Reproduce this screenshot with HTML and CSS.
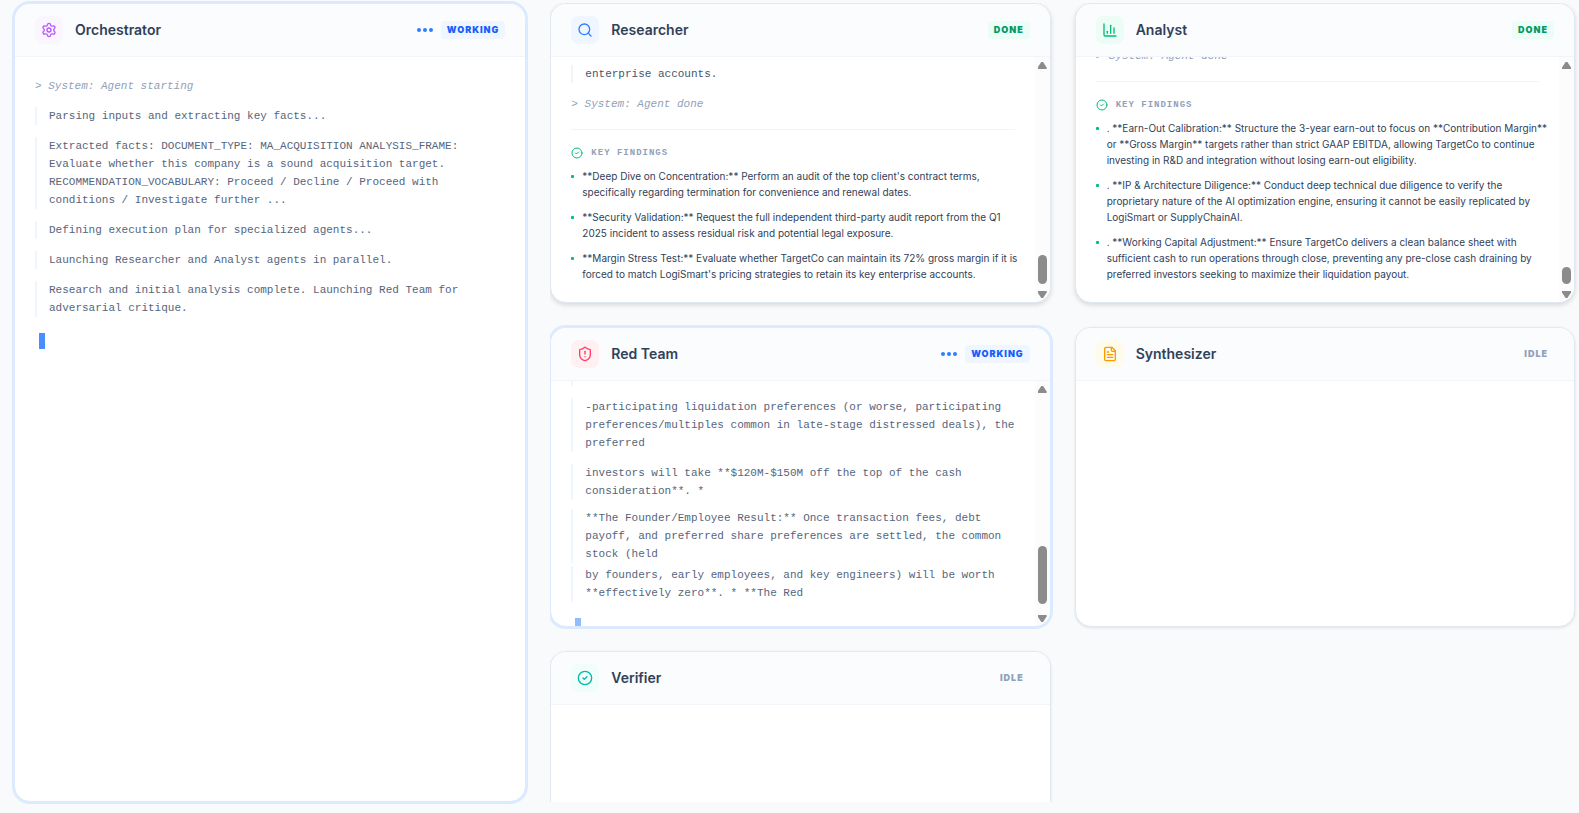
FILE: index.html
```
<!DOCTYPE html>
<html lang="en">

<head>
    <meta charset="UTF-8">
    <meta name="viewport" content="width=device-width, initial-scale=1.0">
    <title>Agent Board</title>
    <link rel="stylesheet" href="styles.css">
</head>

<body>
    <main class="board">
        <section class="card working">
            <header class="card-header">
                <span class="icon purple">
                    <svg viewBox="0 0 24 24"><path d="M9.671 4.136a2.34 2.34 0 0 1 4.659 0 2.34 2.34 0 0 0 3.319 1.915 2.34 2.34 0 0 1 2.33 4.033 2.34 2.34 0 0 0 0 3.831 2.34 2.34 0 0 1-2.33 4.033 2.34 2.34 0 0 0-3.319 1.915 2.34 2.34 0 0 1-4.659 0 2.34 2.34 0 0 0-3.32-1.915 2.34 2.34 0 0 1-2.33-4.033 2.34 2.34 0 0 0 0-3.831A2.34 2.34 0 0 1 6.35 6.051a2.34 2.34 0 0 0 3.319-1.915"/><circle cx="12" cy="12" r="3"/></svg>
                </span>
                <h2>Orchestrator</h2>
                <span class="dots"><i></i><i></i><i></i></span>
                <span class="badge">Working</span>
            </header>
            <div class="card-body">
                <div class="log">
                    <p class="system">&gt; System: Agent starting</p>
                    <p class="line">Parsing inputs and extracting key facts...</p>
                    <p class="line">Extracted facts: DOCUMENT_TYPE: MA_ACQUISITION ANALYSIS_FRAME: Evaluate whether this company is a sound acquisition target. RECOMMENDATION_VOCABULARY: Proceed / Decline / Proceed with conditions / Investigate further ...</p>
                    <p class="line">Defining execution plan for specialized agents...</p>
                    <p class="line">Launching Researcher and Analyst agents in parallel.</p>
                    <p class="line">Research and initial analysis complete. Launching Red Team for adversarial critique.</p>
                    <div class="cursor"></div>
                </div>
            </div>
        </section>

        <div class="agents">
            <section class="card done">
                <header class="card-header">
                    <span class="icon blue">
                        <svg viewBox="0 0 24 24"><circle cx="11" cy="11" r="8"/><path d="m21 21-4.3-4.3"/></svg>
                    </span>
                    <h2>Researcher</h2>
                    <span class="badge">Done</span>
                </header>
                <div class="card-body">
                    <div class="log at-end">
                        <p class="line">enterprise accounts.</p>
                        <p class="system">&gt; System: Agent done</p>
                        <div class="findings">
                            <h3>
                                <svg viewBox="0 0 24 24"><circle cx="12" cy="12" r="10"/><path d="m9 12 2 2 4-4"/></svg>
                                Key Findings
                            </h3>
                            <ul>
                                <li>**Deep Dive on Concentration:** Perform an audit of the top client's contract terms, specifically regarding termination for convenience and renewal dates.</li>
                                <li>**Security Validation:** Request the full independent third-party audit report from the Q1 2025 incident to assess residual risk and potential legal exposure.</li>
                                <li>**Margin Stress Test:** Evaluate whether TargetCo can maintain its 72% gross margin if it is forced to match LogiSmart's pricing strategies to retain its key enterprise accounts.</li>
                            </ul>
                        </div>
                    </div>
                    <div class="scrollbar">
                        <span class="arrow up"></span>
                        <span class="thumb" style="height: 29px"></span>
                        <span class="arrow down"></span>
                    </div>
                </div>
            </section>

            <section class="card done">
                <header class="card-header">
                    <span class="icon green">
                        <svg viewBox="0 0 24 24"><path d="M3 3v16a2 2 0 0 0 2 2h16"/><path d="M18 17V9"/><path d="M13 17V5"/><path d="M8 17v-3"/></svg>
                    </span>
                    <h2>Analyst</h2>
                    <span class="badge">Done</span>
                </header>
                <div class="card-body">
                    <div class="log at-end">
                        <p class="system">&gt; System: Agent done</p>
                        <div class="findings">
                            <h3>
                                <svg viewBox="0 0 24 24"><circle cx="12" cy="12" r="10"/><path d="m9 12 2 2 4-4"/></svg>
                                Key Findings
                            </h3>
                            <ul>
                                <li>. **Earn-Out Calibration:** Structure the 3-year earn-out to focus on **Contribution Margin** or **Gross Margin** targets rather than strict GAAP EBITDA, allowing TargetCo to continue investing in R&amp;D and integration without losing earn-out eligibility.</li>
                                <li>. **IP &amp; Architecture Diligence:** Conduct deep technical due diligence to verify the proprietary nature of the AI optimization engine, ensuring it cannot be easily replicated by LogiSmart or SupplyChainAI.</li>
                                <li>. **Working Capital Adjustment:** Ensure TargetCo delivers a clean balance sheet with sufficient cash to run operations through close, preventing any pre-close cash draining by preferred investors seeking to maximize their liquidation payout.</li>
                            </ul>
                        </div>
                    </div>
                    <div class="scrollbar">
                        <span class="arrow up"></span>
                        <span class="thumb" style="height: 17px"></span>
                        <span class="arrow down"></span>
                    </div>
                </div>
            </section>

            <section class="card working">
                <header class="card-header">
                    <span class="icon red">
                        <svg viewBox="0 0 24 24"><path d="M20 13c0 5-3.5 7.5-7.66 8.95a1 1 0 0 1-.67-.01C7.5 20.5 4 18 4 13V6a1 1 0 0 1 1-1c2 0 4.5-1.2 6.24-2.72a1.17 1.17 0 0 1 1.52 0C14.51 3.81 17 5 19 5a1 1 0 0 1 1 1z"/><path d="M12 8v4"/><path d="M12 16h.01"/></svg>
                    </span>
                    <h2>Red Team</h2>
                    <span class="dots"><i></i><i></i><i></i></span>
                    <span class="badge">Working</span>
                </header>
                <div class="card-body">
                    <div class="log streaming">
                        <p class="line">&nbsp;</p>
                        <p class="line">-participating liquidation preferences (or worse, participating preferences/multiples common in late-stage distressed deals), the preferred</p>
                        <p class="line">investors will take **$120M-$150M off the top of the cash consideration**. *</p>
                        <p class="line settling">**The Founder/Employee Result:** Once transaction fees, debt payoff, and preferred share preferences are settled, the common stock (held</p>
                        <p class="line entering">by founders, early employees, and key engineers) will be worth **effectively zero**. * **The Red</p>
                        <div class="cursor faded"></div>
                    </div>
                    <div class="scrollbar">
                        <span class="arrow up"></span>
                        <span class="thumb" style="height: 58px; margin-bottom: 11px"></span>
                        <span class="arrow down"></span>
                    </div>
                </div>
            </section>

            <section class="card">
                <header class="card-header">
                    <span class="icon amber">
                        <svg viewBox="0 0 24 24"><path d="M15 2H6a2 2 0 0 0-2 2v16a2 2 0 0 0 2 2h12a2 2 0 0 0 2-2V7z"/><path d="M14 2v4a2 2 0 0 0 2 2h4"/><path d="M10 9H8"/><path d="M16 13H8"/><path d="M16 17H8"/></svg>
                    </span>
                    <h2>Synthesizer</h2>
                    <span class="badge">Idle</span>
                </header>
                <div class="card-body"></div>
            </section>

            <section class="card">
                <header class="card-header">
                    <span class="icon teal">
                        <svg viewBox="0 0 24 24"><circle cx="12" cy="12" r="10"/><path d="m9 12 2 2 4-4"/></svg>
                    </span>
                    <h2>Verifier</h2>
                    <span class="badge">Idle</span>
                </header>
                <div class="card-body"></div>
            </section>
        </div>
    </main>
</body>

</html>
```
FILE: styles.css
```
* {
    box-sizing: border-box;
    margin: 0;
    padding: 0;
}

body {
    font-family: 'Inter', sans-serif;
    background-color: #f8fafc;
    color: #314158;
    overflow: hidden;
}

svg {
    display: block;
    fill: none;
    stroke: currentColor;
    stroke-width: 2;
    stroke-linecap: round;
    stroke-linejoin: round;
}

.board {
    display: grid;
    grid-template-columns: 1fr 2fr;
    gap: 24px;
    height: 100vh;
    padding: 3px 4px 11px 14px;
}

.agents {
    display: grid;
    grid-template-columns: 1fr 1fr;
    grid-auto-rows: 300px;
    gap: 24px;
    min-height: 0;
    overflow: clip;
    margin-right: -4px;
    padding-right: 4px;
}

.card {
    display: flex;
    flex-direction: column;
    min-width: 0;
    background-color: #fff;
    border: 1px solid #e2e8f0;
    border-radius: 16px;
    box-shadow: 0 1px 3px rgba(0, 0, 0, 0.1);
    overflow: hidden;
}

.card.done {
    box-shadow: 0 2px 5px rgba(0, 0, 0, 0.14);
}

.card.working {
    border-color: #dbeafe;
    box-shadow: 0 0 0 2px #dbeafe;
}

.card-header {
    display: flex;
    align-items: center;
    padding: 12px 20px;
    background-color: #fbfcfe;
    border-bottom: 1px solid #f1f5f9;
}

.card-header h2 {
    flex: 1;
    margin-left: 12px;
    font-size: 14px;
    line-height: 20px;
    font-weight: 600;
}

.icon {
    padding: 6px;
    border-radius: 8px;
}

.icon svg {
    width: 16px;
    height: 16px;
}

.purple {
    color: #b857ff;
    background-color: #faf5ff;
}

.blue {
    color: #2b7fff;
    background-color: #eff6ff;
}

.green {
    color: #00bc7d;
    background-color: #ecfdf5;
}

.red {
    color: #ff3d6b;
    background-color: #fff1f2;
}

.amber {
    color: #fe9a00;
    background-color: #fffbeb;
}

.teal {
    color: #00bba7;
    background-color: #f0fdfa;
}

.badge {
    padding: 0 6px;
    border-radius: 4px;
    color: #90a1b9;
    font-size: 9px;
    line-height: 18px;
    font-weight: 900;
    letter-spacing: 1px;
    text-transform: uppercase;
}

.done .badge {
    color: #009966;
    background-color: #ecfdf5;
}

.working .badge {
    color: #155dfc;
    background-color: #eff6ff;
}

.dots {
    display: flex;
    gap: 2px;
    margin-right: 8px;
}

.dots i {
    width: 4px;
    height: 4px;
    border-radius: 50%;
    background-color: #2b7fff;
}

.card-body {
    display: flex;
    flex: 1;
    min-height: 0;
    overflow: hidden;
}

.log {
    display: flex;
    flex: 1;
    flex-direction: column;
    gap: 12px;
    min-width: 0;
    padding: 20px;
    color: #55657d;
    font-family: 'Liberation Mono', monospace;
    font-size: 11px;
    line-height: 18px;
}

.log.at-end {
    justify-content: flex-end;
}

.log.streaming {
    margin-top: -13px;
    padding-top: 0;
}

.line {
    padding-left: 12px;
    border-left: 2px solid #f1f5f9;
}

.working .line {
    border-color: #eff6ff;
}

.done .line {
    color: #45556c;
}

.line.settling {
    margin-top: -3px;
}

.line.entering {
    margin-top: -9px;
}

.system {
    color: #90a1b9;
    font-style: italic;
}

.cursor {
    flex: none;
    width: 6px;
    height: 16px;
    margin: 4px 0 0 4px;
    background-color: #478fff;
}

.cursor.faded {
    opacity: 0.6;
}

.findings {
    margin-top: 4px;
    padding-top: 16px;
    border-top: 1px solid #f1f5f9;
}

.findings h3 {
    display: flex;
    align-items: center;
    gap: 8px;
    margin-bottom: 8px;
    color: #90a1b9;
    font-size: 9px;
    line-height: 14px;
    letter-spacing: 1px;
    text-transform: uppercase;
}

.findings h3 svg {
    width: 12px;
    height: 12px;
    color: #00bc7d;
}

.findings ul {
    display: flex;
    flex-direction: column;
    gap: 9px;
    margin-right: -10px;
    list-style: none;
}

.findings li {
    display: flex;
    gap: 8px;
    color: #314158;
    font-family: 'Inter', sans-serif;
    font-size: 10px;
    line-height: 16px;
}

.findings li::before {
    content: '';
    flex: none;
    width: 3px;
    height: 3px;
    margin-top: 7px;
    border-radius: 1px;
    background-color: #00bc7d;
}

.scrollbar {
    display: flex;
    flex-direction: column;
    align-items: center;
    width: 15px;
    padding: 5px 0 4px;
    background-color: #fcfcfc;
}

.arrow {
    width: 9px;
    height: 7px;
    background-color: #8b8b8b;
}

.arrow.up {
    clip-path: polygon(40% 0, 60% 0, 100% 80%, 100% 100%, 0 100%, 0 80%);
}

.arrow.down {
    clip-path: polygon(0 0, 100% 0, 100% 20%, 60% 100%, 40% 100%, 0 20%);
}

.thumb {
    width: 9px;
    margin-top: auto;
    margin-bottom: 7px;
    border-radius: 5px;
    background-color: #8b8b8b;
}
```
